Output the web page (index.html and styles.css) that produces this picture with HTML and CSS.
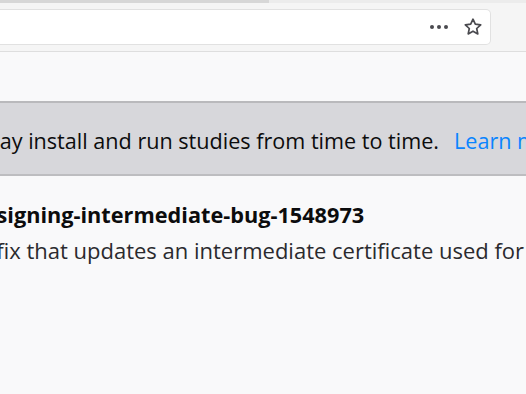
FILE: index.html
```html
<!DOCTYPE html>
<html lang="en">
<head>
  <meta charset="UTF-8">
  <title>Shield Studies</title>
  <link rel="stylesheet" href="styles.css">
</head>
<body>
  <div class="tabstrip">
    <div class="tab"></div>
  </div>
  <div class="toolbar">
    <div class="urlbar">
      <span class="page-actions">
        <svg class="dots" width="20" height="6" viewBox="0 0 20 6">
          <circle cx="3" cy="3" r="2" fill="#4a4a4f"/>
          <circle cx="10" cy="3" r="2" fill="#4a4a4f"/>
          <circle cx="17" cy="3" r="2" fill="#4a4a4f"/>
        </svg>
        <svg class="star" width="20" height="20" viewBox="0 0 20 20">
          <path d="M10 2.2l2.3 5 5.4.6-4 3.7 1.1 5.4L10 14.2l-4.8 2.7 1.1-5.4-4-3.7 5.4-.6z" fill="none" stroke="#4a4a4f" stroke-width="1.7" stroke-linejoin="round"/>
        </svg>
      </span>
    </div>
  </div>

  <div class="content">
    <div class="info-banner">
      <span class="clip-start">Firefox may install and run studies from time to time.</span>
      <a class="learn-more" href="#">Learn more</a>
    </div>

    <div class="study">
      <div class="study-name">hotfix-update-xpi-signing-intermediate-bug-1548973</div>
      <div class="study-desc">A hotfix that updates an intermediate certificate used for signing add-ons.</div>
    </div>
  </div>
</body>
</html>
```

FILE: styles.css
```css
body {
  margin: 0;
  overflow: hidden;
  background-color: #f9f9fa;
  font-family: "Open Sans", "Noto Sans", sans-serif;
  color: #0c0c0d;
}
.tabstrip {
  height: 3px;
  background: #ececec;
}
.tab {
  width: 269px;
  height: 3px;
  background: #d7d7d7;
}
.toolbar {
  background: #f5f5f5;
  padding: 6px 0 6px;
  border-bottom: 1px solid #dedede;
  height: 36px;
}
.urlbar {
  width: 490px;
  height: 34px;
  background: white;
  border: 1px solid #e1e1e1;
  border-left: none;
  border-radius: 0 5px 5px 0;
  display: flex;
  justify-content: flex-end;
  align-items: center;
}
.page-actions {
  display: flex;
  align-items: center;
  gap: 14px;
  margin-right: 7px;
}
.content {
  padding-top: 49px;
}
.info-banner {
  background: #d7d7db;
  border-top: 2px solid #b9b9bc;
  border-bottom: 2px solid #bdbdc0;
  display: flex;
  align-items: center;
  white-space: nowrap;
  font-size: 21.6px;
  padding-top: 4px;
  box-sizing: border-box;
  height: 75px;
}
.clip-start {
  margin-left: -95px;
}
.learn-more {
  color: #0a84ff;
  text-decoration: none;
  margin-left: 15px;
}
.study {
  padding-top: 24px;
  white-space: nowrap;
}
.study-name {
  font-weight: bold;
  font-size: 21.7px;
  line-height: 30px;
  margin-left: -199px;
}
.study-desc {
  font-size: 22px;
  line-height: 28px;
  color: #2a2a2e;
  margin-left: -58px;
  margin-top: 6px;
}
```
